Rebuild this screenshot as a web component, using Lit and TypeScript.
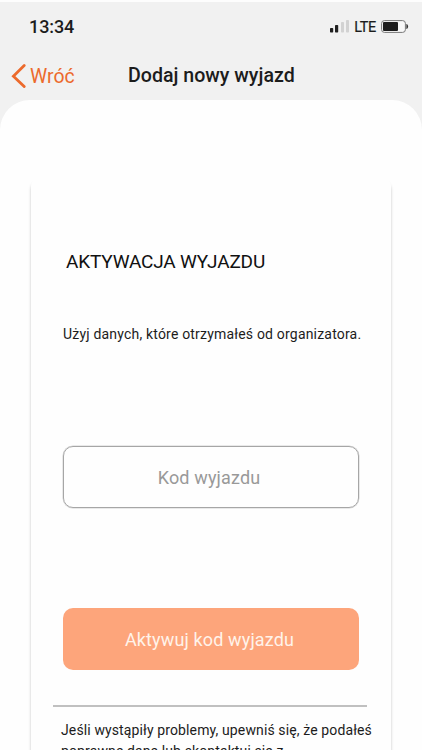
import { LitElement, html, css } from "lit";
import { customElement } from "lit/decorators.js";

@customElement("app-root")
export class AppRoot extends LitElement {
  static styles = css`
    :host {
      display: block;
      height: 750px;
      overflow: hidden;
      font-family: Roboto, "Liberation Sans", sans-serif;
      color: #1c1c1c;
      background: #f1f1f1;
    }
    * { box-sizing: border-box; }
    .screen { display: flex; flex-direction: column; height: 750px; border-top: 2px solid #fdfdfd; }
    .status { display: flex; align-items: center; justify-content: space-between; height: 50px; padding: 0 13px 0 29px; }
    .time { font-size: 18px; font-weight: 500; line-height: 24px; letter-spacing: -0.1px; }
    .indicators { display: flex; align-items: center; padding-bottom: 1px; }
    .lte { font-size: 14.5px; line-height: 20px; margin: 0 5px 0 5px; padding-top: 2px; letter-spacing: -0.3px; -webkit-text-stroke: 0.2px #1c1c1c; }
    svg { display: block; }
    .nav { display: grid; grid-template-columns: 128px 1fr; align-items: center; height: 48px; }
    .back { display: flex; align-items: center; padding-left: 11px; gap: 4px; color: #ec6a2c; font-size: 19.4px; line-height: 24px; }
    .back span { padding-top: 1px; }
    .title { margin: 0; font-size: 19.6px; line-height: 24px; font-weight: 500; white-space: nowrap; }
    .sheet { flex: 1; min-height: 0; overflow: hidden; background: #fefefe; border-radius: 30px 30px 0 0; padding: 78px 31px 0 31px; }
    .card { height: 700px; border-radius: 8px; background: #fefefe; box-shadow: 0 4px 3px rgba(0, 0, 0, 0.24); padding: 72px 0 0 32px; white-space: nowrap; }
    .heading { margin: 0 0 0 3px; font-size: 19px; font-weight: 400; line-height: 24px; letter-spacing: -0.18px; color: #111; }
    .lead { margin: 50px 0 0; font-size: 14px; line-height: 20px; letter-spacing: 0.19px; }
    .field, .button { display: flex; align-items: center; justify-content: center; width: 296px; height: 62px; border-radius: 10px; font-size: 18px; letter-spacing: 0.14px; }
    .field { margin-top: 102px; padding-right: 4px; border: 1px solid #a6a6a6; box-shadow: 0 0 0 0.5px #d4d4d4; color: #999; }
    .button { margin-top: 100px; padding-right: 3px; background: #fda57b; color: #fff3ea; }
    .rule { width: 314px; height: 2px; margin: 35px 0 0 -10px; background: #c0c0c0; }
    .help { margin: 13px 0 0 -2px; font-size: 14px; line-height: 21px; letter-spacing: 0.12px; }
  `;

  render() {
    return html`
      <div class="screen">
        <div class="status">
          <span class="time">13:34</span>
          <div class="indicators">
            <svg width="19" height="13" viewBox="0 0 19 13">
              <rect x="0" y="8" width="3.2" height="4.5" rx=".7" fill="#202020" />
              <rect x="5" y="5" width="3.2" height="7.5" rx=".7" fill="#202020" />
              <rect x="11" y="2" width="3" height="10.5" rx=".7" fill="#d2d2d2" />
              <rect x="16" y="0" width="3" height="12.5" rx=".7" fill="#d2d2d2" />
            </svg>
            <span class="lte">LTE</span>
            <svg width="28" height="13" viewBox="0 0 28 13">
              <rect x=".6" y=".6" width="23.8" height="11.8" rx="2.8" fill="#f8f8f8" stroke="#777" stroke-width="1" />
              <rect x="2" y="2" width="15" height="9" rx="1" fill="#1d1d1d" />
              <path d="M25.4 4v5c2.3-.6 2.3-4.4 0-5z" fill="#333" />
            </svg>
          </div>
        </div>
        <div class="nav">
          <div class="back">
            <svg width="15" height="24" viewBox="0 0 15 24">
              <path d="M13.2 1.6 2.4 12.2l10.8 10.4" fill="none" stroke="#ec6a2c" stroke-width="2.8" stroke-linecap="round" />
            </svg>
            <span>Wróć</span>
          </div>
          <h1 class="title">Dodaj nowy wyjazd</h1>
        </div>
        <main class="sheet">
          <section class="card">
            <h2 class="heading">AKTYWACJA WYJAZDU</h2>
            <p class="lead">Użyj danych, które otrzymałeś od organizatora.</p>
            <div class="field">Kod wyjazdu</div>
            <div class="button">Aktywuj kod wyjazdu</div>
            <div class="rule"></div>
            <p class="help">Jeśli wystąpiły problemy, upewniś się, że podałeś<br />poprawne dane lub skontaktuj się z</p>
          </section>
        </main>
      </div>
    `;
  }
}
